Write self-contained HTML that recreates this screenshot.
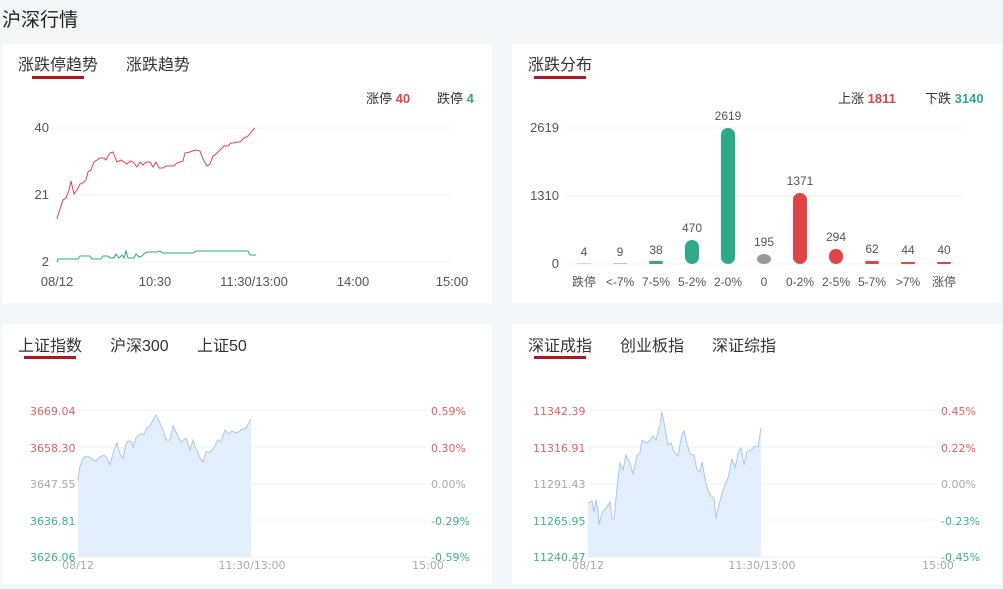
<!DOCTYPE html><html><head><meta charset="utf-8"><style>
body{margin:0;width:1003px;height:589px;background:#f5f6f8;font-family:"Liberation Sans","Noto Sans CJK SC",sans-serif;position:relative;overflow:hidden}
.t{position:absolute;white-space:nowrap}
.p{position:absolute;background:#fff}
.tab{position:absolute;font-size:16px;color:#333;top:51px}
.ul{position:absolute;height:3px;background:#b3171d;width:52px}
svg{position:absolute;left:0;top:0}
</style></head><body>
<div class="t" style="left:2px;top:5px;font-size:19px;color:#222">沪深行情</div>
<div class="p" style="left:2px;top:44px;width:490px;height:259px"></div>
<div class="p" style="left:512px;top:44px;width:489px;height:259px"></div>
<div class="p" style="left:2px;top:324px;width:490px;height:260px"></div>
<div class="p" style="left:512px;top:324px;width:489px;height:260px"></div>
<div class="tab" style="left:18px">涨跌停趋势</div><div class="tab" style="left:126px">涨跌趋势</div>
<div class="ul" style="left:32px;top:76px"></div>
<div class="tab" style="left:528px">涨跌分布</div>
<div class="ul" style="left:534px;top:76px"></div>
<div class="tab" style="left:18px;top:332px">上证指数</div><div class="tab" style="left:110px;top:332px">沪深300</div><div class="tab" style="left:197px;top:332px">上证50</div>
<div class="ul" style="left:24px;top:356px"></div>
<div class="tab" style="left:528px;top:332px">深证成指</div><div class="tab" style="left:620px;top:332px">创业板指</div><div class="tab" style="left:712px;top:332px">深证综指</div>
<div class="ul" style="left:534px;top:356px"></div>
<div class="t" style="left:366px;top:88px;font-size:13px;color:#333">涨停 <b style="color:#e04444">40</b></div>
<div class="t" style="left:437px;top:88px;font-size:13px;color:#333">跌停 <b style="color:#2ea98a">4</b></div>
<div class="t" style="left:838px;top:88px;font-size:13px;color:#333">上涨 <b style="color:#e04444">1811</b></div>
<div class="t" style="left:925px;top:88px;font-size:13px;color:#333">下跌 <b style="color:#2ea98a">3140</b></div>
<svg width="1003" height="589" font-family="Liberation Sans, Noto Sans CJK SC, sans-serif">
<g stroke="#eef0f3" stroke-width="1">
<line x1="57" y1="128" x2="452" y2="128"/><line x1="57" y1="195" x2="452" y2="195"/><line x1="57" y1="262" x2="452" y2="262"/>
<line x1="566" y1="128" x2="962" y2="128"/><line x1="566" y1="196" x2="962" y2="196"/><line x1="566" y1="264" x2="962" y2="264"/>
<line x1="78" y1="410" x2="428" y2="410"/><line x1="78" y1="447" x2="428" y2="447"/><line x1="78" y1="484" x2="428" y2="484"/><line x1="78" y1="520" x2="428" y2="520"/><line x1="78" y1="557" x2="428" y2="557"/>
<line x1="588" y1="410" x2="938" y2="410"/><line x1="588" y1="447" x2="938" y2="447"/><line x1="588" y1="484" x2="938" y2="484"/><line x1="588" y1="520" x2="938" y2="520"/><line x1="588" y1="557" x2="938" y2="557"/>
</g>
<g font-size="13" fill="#555">
<text x="49" y="132" text-anchor="end">40</text><text x="49" y="199" text-anchor="end">21</text><text x="49" y="266" text-anchor="end">2</text>
<text x="57" y="286" text-anchor="middle">08/12</text><text x="155" y="286" text-anchor="middle">10:30</text><text x="254" y="286" text-anchor="middle">11:30/13:00</text><text x="353" y="286" text-anchor="middle">14:00</text><text x="452" y="286" text-anchor="middle">15:00</text>
<text x="559" y="132" text-anchor="end">2619</text><text x="559" y="200" text-anchor="end">1310</text><text x="559" y="268" text-anchor="end">0</text>
</g>
<polyline fill="none" stroke="#e04444" stroke-width="1" points="57,219 60,209 63,200 66,198 69,190 71,181 74,194 77,190 80,184 83,183 86,180 88,172 91,170 94,162 97,160 100,158 102,158 104,158 106,160 110,153 113,152 115,157 117,162 121,160 124,162 127,164 130,161 133,162 137,167 140,162 143,165 146,162 150,162 153,167 156,162 159,168 163,168 166,166 174,166 177,163 180,162 183,161 185,153 190,152 195,150 200,151 203,159 207,166 210,164 213,156 216,154 220,150 224,146 228,146 231,143 234,143 237,142 240,142 244,138 248,136 252,131 255,128"/>
<polyline fill="none" stroke="#2ea98a" stroke-width="1" points="57,262 58,259 78,259 80,256 90,256 92,259 101,259 103,256 108,256 110,258 114,258 116,254 119,258 122,255 124,258 126,251 128,258 134,258 136,254 139,257 142,256 145,253 148,252 157,252 160,251 162,253 193,253 196,251 198,251 248,251 250,255 256,255"/>
<g font-size="12" fill="#555" text-anchor="middle">
<text x="584" y="256">4</text><text x="620" y="256">9</text><text x="656" y="254">38</text><text x="692" y="232">470</text><text x="728" y="120">2619</text><text x="764" y="246">195</text><text x="800" y="185">1371</text><text x="836" y="241">294</text><text x="872" y="253">62</text><text x="908" y="254">44</text><text x="944" y="254">40</text>
<text x="584" y="286">跌停</text><text x="620" y="286">&lt;-7%</text><text x="656" y="286">7-5%</text><text x="692" y="286">5-2%</text><text x="728" y="286">2-0%</text><text x="764" y="286">0</text><text x="800" y="286">0-2%</text><text x="836" y="286">2-5%</text><text x="872" y="286">5-7%</text><text x="908" y="286">&gt;7%</text><text x="944" y="286">涨停</text>
</g>
<g>
<rect x="577" y="263" width="14" height="1" fill="#bfe3d8"/>
<rect x="613" y="263" width="14" height="1" fill="#9fd4c4"/>
<rect x="649" y="261" width="14" height="3" rx="1.5" fill="#2ea98a"/>
<rect x="685" y="240" width="14" height="24" rx="7" fill="#2ea98a"/>
<rect x="721" y="128" width="14" height="136" rx="7" fill="#2ea98a"/>
<rect x="757" y="254" width="14" height="10" rx="7" fill="#999"/>
<rect x="793" y="193" width="14" height="71" rx="7" fill="#e04444"/>
<rect x="829" y="249" width="14" height="15" rx="7" fill="#e04444"/>
<rect x="865" y="261" width="14" height="3" rx="1.5" fill="#e04444"/>
<rect x="901" y="262" width="14" height="2" rx="1" fill="#e04444"/>
<rect x="937" y="262" width="14" height="2" rx="1" fill="#e04444"/>
</g>
<polygon fill="#e3effd" points="78,557 78,480 80,466 84,457 88,456 93,460 96,461 100,457 104,455 107,458 110,465 114,450 117,443 120,454 123,458 126,444 128,441 132,442 133,448 136,438 140,434 144,434 147,428 150,426 153,420 156,415 160,423 163,430 166,440 170,440 173,426 177,434 181,442 186,438 190,450 193,440 196,449 200,458 203,462 206,452 210,452 214,448 218,440 221,442 225,430 229,434 232,431 237,433 241,430 246,428 251,419 251,557"/>
<polyline fill="none" stroke="#a6c8f5" stroke-width="1" points="78,480 80,466 84,457 88,456 93,460 96,461 100,457 104,455 107,458 110,465 114,450 117,443 120,454 123,458 126,444 128,441 132,442 133,448 136,438 140,434 144,434 147,428 150,426 153,420 156,415 160,423 163,430 166,440 170,440 173,426 177,434 181,442 186,438 190,450 193,440 196,449 200,458 203,462 206,452 210,452 214,448 218,440 221,442 225,430 229,434 232,431 237,433 241,430 246,428 251,419"/>
<polygon fill="#e3effd" points="588,557 588,503 592,501 594,512 596,500 598,510 599,525 602,513 606,508 610,502 612,519 614,519 617,488 620,463 623,470 626,455 630,463 633,474 637,455 640,453 642,440 646,443 650,441 653,436 656,440 660,425 662,412 665,428 668,445 671,443 674,452 678,456 682,434 684,431 687,444 690,454 694,455 697,470 700,472 702,462 706,484 710,495 714,498 716,519 719,504 723,490 728,478 732,459 735,468 739,450 741,448 744,465 747,452 751,450 755,446 758,447 761,428 761,557"/>
<polyline fill="none" stroke="#a6c8f5" stroke-width="1" points="588,503 592,501 594,512 596,500 598,510 599,525 602,513 606,508 610,502 612,519 614,519 617,488 620,463 623,470 626,455 630,463 633,474 637,455 640,453 642,440 646,443 650,441 653,436 656,440 660,425 662,412 665,428 668,445 671,443 674,452 678,456 682,434 684,431 687,444 690,454 694,455 697,470 700,472 702,462 706,484 710,495 714,498 716,519 719,504 723,490 728,478 732,459 735,468 739,450 741,448 744,465 747,452 751,450 755,446 758,447 761,428"/>
<g font-size="11" font-family="DejaVu Sans, sans-serif">
<text x="30" y="415" fill="#e86060">3669.04</text><text x="30" y="452" fill="#e86060">3658.30</text><text x="30" y="488" fill="#aaa">3647.55</text><text x="30" y="525" fill="#3bb390">3636.81</text><text x="30" y="561" fill="#3bb390">3626.06</text>
<text x="431" y="415" fill="#e86060">0.59%</text><text x="431" y="452" fill="#e86060">0.30%</text><text x="431" y="488" fill="#aaa">0.00%</text><text x="431" y="525" fill="#3bb390">-0.29%</text><text x="431" y="561" fill="#3bb390">-0.59%</text>
<text x="78" y="569" fill="#aaa" text-anchor="middle">08/12</text><text x="252" y="569" fill="#aaa" text-anchor="middle">11:30/13:00</text><text x="428" y="569" fill="#aaa" text-anchor="middle">15:00</text>
<text x="533" y="415" fill="#e86060">11342.39</text><text x="533" y="452" fill="#e86060">11316.91</text><text x="533" y="488" fill="#aaa">11291.43</text><text x="533" y="525" fill="#3bb390">11265.95</text><text x="533" y="561" fill="#3bb390">11240.47</text>
<text x="941" y="415" fill="#e86060">0.45%</text><text x="941" y="452" fill="#e86060">0.22%</text><text x="941" y="488" fill="#aaa">0.00%</text><text x="941" y="525" fill="#3bb390">-0.23%</text><text x="941" y="561" fill="#3bb390">-0.45%</text>
<text x="588" y="569" fill="#aaa" text-anchor="middle">08/12</text><text x="762" y="569" fill="#aaa" text-anchor="middle">11:30/13:00</text><text x="938" y="569" fill="#aaa" text-anchor="middle">15:00</text>
</g>
</svg>
</body></html>
